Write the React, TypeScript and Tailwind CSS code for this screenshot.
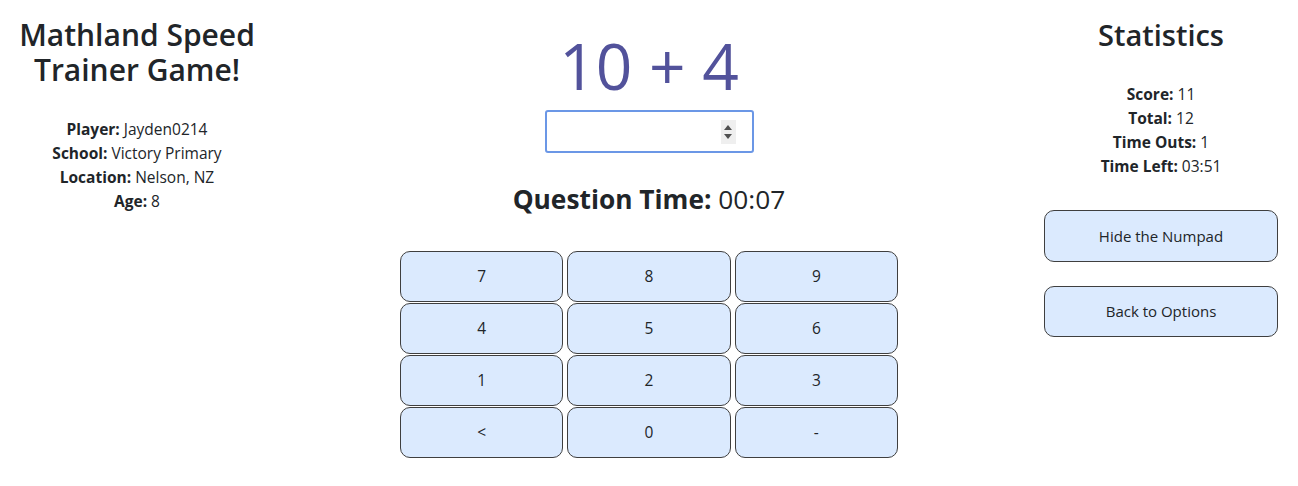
import { useState } from "react";

const KEYS = ["7", "8", "9", "4", "5", "6", "1", "2", "3", "<", "0", "-"];

const PLAYER = [
  ["Player:", "Jayden0214"],
  ["School:", "Victory Primary"],
  ["Location:", "Nelson, NZ"],
  ["Age:", "8"],
];

const STATS = [
  ["Score:", "11"],
  ["Total:", "12"],
  ["Time Outs:", "1"],
  ["Time Left:", "03:51"],
];

function InfoList({ rows }: { rows: string[][] }) {
  return (
    <div className="text-[15.5px] leading-[24px]">
      {rows.map(([label, value]) => (
        <div key={label}>
          <span className="font-bold">{label}</span> {value}
        </div>
      ))}
    </div>
  );
}

export default function App() {
  const [answer, setAnswer] = useState("");

  return (
    <div
      className="grid grid-cols-[274px_1fr_274px] h-[486px] w-[1298px] bg-white text-[#212529] text-center"
      style={{ fontFamily: '"Segoe UI", "Open Sans", sans-serif' }}
    >
      {/* left column */}
      <div className="pt-[17px]">
        <h3 className="text-[30px] leading-[35px] font-semibold">
          <div>Mathland Speed</div>
          <div>Trainer Game!</div>
        </h3>
        <div className="mt-[30px]">
          <InfoList rows={PLAYER} />
        </div>
      </div>

      {/* middle column */}
      <div className="flex flex-col items-center">
        <div className="mt-[28px] text-[64px] leading-[76px] text-[#52529b]">
          10 + 4
        </div>
        <div className="mt-[6px] flex items-center w-[209px] h-[43px] border-2 border-[#6b97e6] rounded-[3px] bg-white">
          <input
            type="text"
            value={answer}
            onChange={(e) => setAnswer(e.target.value)}
            className="flex-1 min-w-0 h-full px-2 outline-none bg-transparent"
          />
          <div className="mr-[16px] w-[15px] h-[24px] bg-[#efefef] flex flex-col items-center justify-center gap-[4px]">
            <div className="w-0 h-0 border-l-[4px] border-r-[4px] border-b-[5px] border-l-transparent border-r-transparent border-b-[#505050]" />
            <div className="w-0 h-0 border-l-[4px] border-r-[4px] border-t-[5px] border-l-transparent border-r-transparent border-t-[#505050]" />
          </div>
        </div>
        <h3 className="mt-[30px] text-[26.3px] leading-[32px]">
          <span className="font-bold">Question Time:</span> 00:07
        </h3>
        <div className="mt-[36px] grid grid-cols-3 gap-x-[4px] gap-y-px w-[498px]">
          {KEYS.map((k) => (
            <button
              key={k}
              className="h-[51px] rounded-[10px] border border-[#3f3f3f] bg-[#dbeafe] text-[15.5px] text-[#212529]"
              onClick={() => setAnswer((a) => (k === "<" ? a.slice(0, -1) : a + k))}
            >
              {k}
            </button>
          ))}
        </div>
      </div>

      {/* right column */}
      <div className="pt-[17px] px-[20px] flex flex-col items-stretch">
        <h2 className="text-[29px] leading-[36px] font-semibold">Statistics</h2>
        <div className="mt-[29px]">
          <InfoList rows={STATS} />
        </div>
        <button className="mt-[32px] h-[52px] rounded-[10px] border border-[#3f3f3f] bg-[#dbeafe] text-[15px]">
          Hide the Numpad
        </button>
        <button className="mt-[24px] h-[51px] rounded-[10px] border border-[#3f3f3f] bg-[#dbeafe] text-[15px]">
          Back to Options
        </button>
      </div>
    </div>
  );
}
